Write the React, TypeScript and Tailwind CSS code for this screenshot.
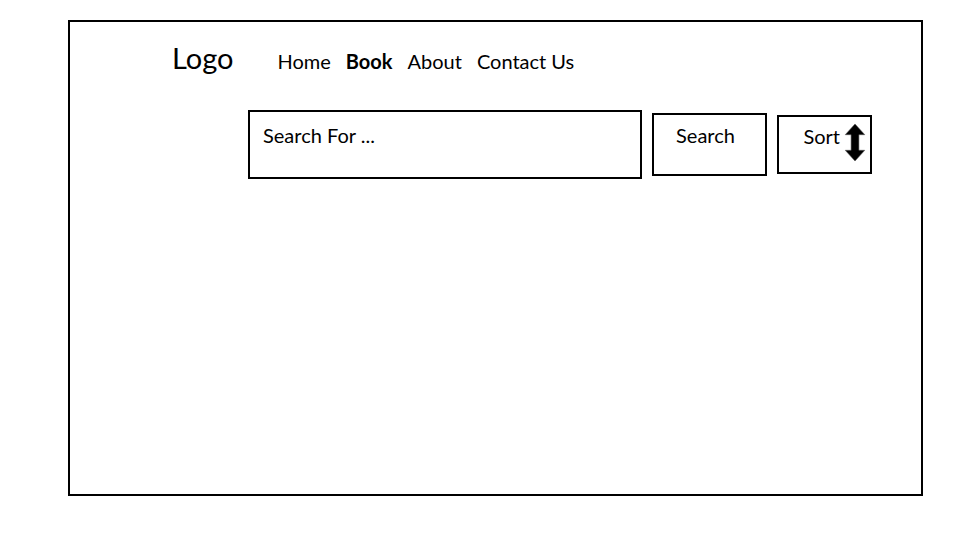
const font = { fontFamily: 'Lato, "Open Sans", sans-serif' };

function SortArrow() {
  return (
    <svg width="22" height="39" viewBox="0 0 22 40" className="ml-[4px] -mt-[4px]">
      <path
        d="M11 1 L21 12 L15 12 L15 28 L21 28 L11 39 L1 28 L7 28 L7 12 L1 12 Z"
        fill="black"
        stroke="#555"
        strokeWidth="0.6"
      />
    </svg>
  );
}

export default function App() {
  return (
    <div className="w-[977px] h-[541px] bg-white text-black" style={font}>
      <div className="ml-[68px] pt-[20px]">
        <div className="w-[855px] h-[476px] border-2 border-black flex flex-col">
          <div className="flex items-baseline pl-[102px] pt-[21px]">
            <span className="text-[29px] leading-none">Logo</span>
            <nav className="flex items-baseline gap-[15px] ml-[44px] text-[20px] leading-none">
              <a>Home</a>
              <a className="font-bold">Book</a>
              <a>About</a>
              <a>Contact Us</a>
            </nav>
          </div>
          <div className="flex items-center gap-[10px] pl-[178px] mt-[38px]">
            <div className="w-[394px] h-[69px] border-2 border-black pl-[13px] pt-[8px] text-[20px]">
              Search For ...
            </div>
            <button className="w-[115px] h-[63px] border-2 border-black flex justify-center pt-[5px] pr-[8px] text-[20px]">
              Search
            </button>
            <button className="w-[95px] h-[59px] border-2 border-black flex items-center justify-end pr-[4px] text-[20px]">
              <span className="-mt-[18px]">Sort</span>
              <SortArrow />
            </button>
          </div>
        </div>
      </div>
    </div>
  );
}
